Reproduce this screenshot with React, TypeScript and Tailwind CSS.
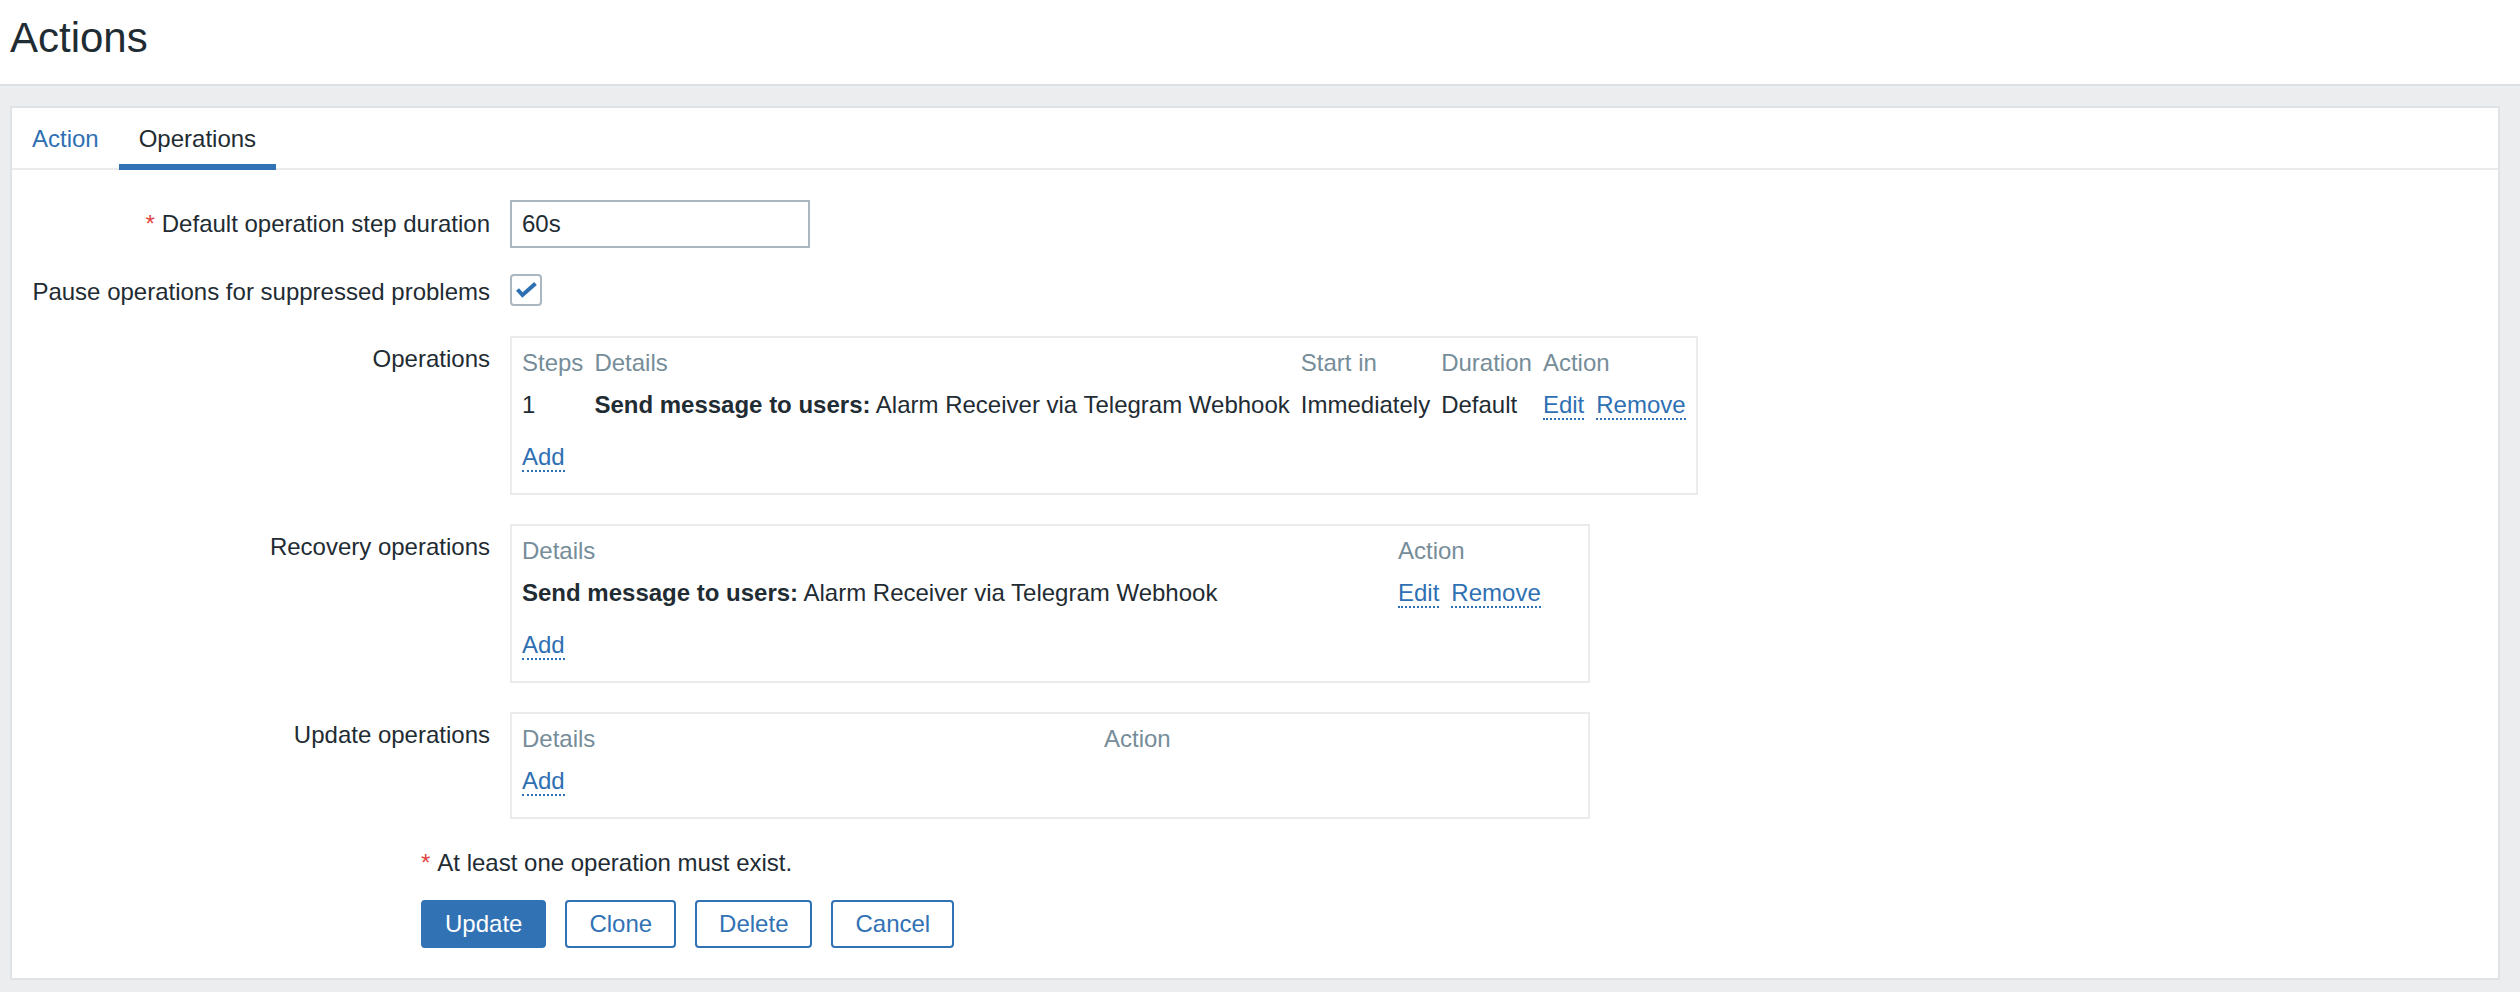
import React from "react";

const linkCls = "text-[#2f70b3] border-b-2 border-dotted border-[#2f70b3] cursor-pointer";

const Req = () => <span className="text-[#e0443f] mr-[7px]">*</span>;

const Add = () => (
  <span className={linkCls}>Add</span>
);

const EditRemove = () => (
  <span className="whitespace-nowrap">
    <span className={linkCls + " mr-[12px]"}>Edit</span>
    <span className={linkCls}>Remove</span>
  </span>
);

const th = "text-left font-normal text-[#768d99] px-[5.5px] pt-[11px] pb-[4px] whitespace-nowrap";
const td = "px-[5.5px] pt-[10px] pb-[14px] whitespace-nowrap align-top";
const tdAdd = "px-[5.5px] pt-[10px] pb-[22px]";

const SendMsg = () => (
  <>
    <b>Send message to users:</b> Alarm Receiver via Telegram Webhook
  </>
);

const FormRow = ({ label, children, className = "", labelCls = "" }: { label: React.ReactNode; children: React.ReactNode; className?: string; labelCls?: string }) => (
  <div className={"flex gap-[20px] " + className}>
    <div className={"w-[478px] shrink-0 text-right " + labelCls}>{label}</div>
    <div>{children}</div>
  </div>
);

const btn = "h-[48px] px-[22px] rounded-[4px] border-2 border-[#3172b4]";

export default function App() {
  return (
    <div className="min-h-screen bg-[#ebedef] font-['Liberation_Sans',Arial,sans-serif] text-[24px] leading-[28px] text-[#1f2c33]">
      <div className="h-[86px] bg-white border-b-2 border-[#dde0e3] pl-[10px] pt-[14px]">
        <h1 className="text-[42px] leading-[48px]">Actions</h1>
      </div>

      <div className="pt-[20px] pl-[10px] pr-[20px] pb-[12px]">
        <div className="bg-white border-2 border-[#dfe3e6] pb-[30px]">
          {/* tabs */}
          <div className="flex border-b-2 border-[#ebebeb]">
            <div className="px-[20px] pt-[17px] pb-[11px] border-b-[6px] border-transparent mb-[-2px] text-[#2f70b3]">
              Action
            </div>
            <div className="px-[20px] pt-[17px] pb-[11px] border-b-[6px] border-[#3172b4] mb-[-2px]">
              Operations
            </div>
          </div>

          <div className="pt-[30px]">
            <FormRow
              className="items-center"
              label={
                <>
                  <Req />
                  Default operation step duration
                </>
              }
            >
              <input
                defaultValue="60s"
                className="w-[300px] h-[48px] border-2 border-[#acb6be] px-[10px] outline-none"
              />
            </FormRow>

            <FormRow className="mt-[26px] items-start" labelCls="pt-[4px]" label="Pause operations for suppressed problems">
              <div className="w-[32px] h-[32px] border-2 border-[#acb6be] rounded-[4px] flex items-center justify-center">
                <svg width="32" height="32" viewBox="0 0 32 32" className="-m-[2px]">
                  <path d="M7.5 15.5 L12.5 21 L25.5 9.5" fill="none" stroke="#2f70b3" strokeWidth="4" />
                </svg>
              </div>
            </FormRow>

            <FormRow className="mt-[30px]" labelCls="pt-[9px]" label="Operations">
              <div className="border-2 border-[#ebebeb] px-[4.5px] min-w-[1080px] w-fit">
                <table className="border-collapse">
                  <thead>
                    <tr>
                      <th className={th}>Steps</th>
                      <th className={th}>Details</th>
                      <th className={th}>Start in</th>
                      <th className={th}>Duration</th>
                      <th className={th}>Action</th>
                    </tr>
                  </thead>
                  <tbody>
                    <tr>
                      <td className={td}>1</td>
                      <td className={td}>
                        <SendMsg />
                      </td>
                      <td className={td}>Immediately</td>
                      <td className={td}>Default</td>
                      <td className={td}>
                        <EditRemove />
                      </td>
                    </tr>
                    <tr>
                      <td className={tdAdd} colSpan={5}>
                        <Add />
                      </td>
                    </tr>
                  </tbody>
                </table>
              </div>
            </FormRow>

            <FormRow className="mt-[29px]" labelCls="pt-[9px]" label="Recovery operations">
              <div className="border-2 border-[#ebebeb] px-[4.5px] w-[1080px]">
                <table className="border-collapse table-fixed w-full">
                  <colgroup>
                    <col className="w-[876px]" />
                    <col />
                  </colgroup>
                  <thead>
                    <tr>
                      <th className={th}>Details</th>
                      <th className={th}>Action</th>
                    </tr>
                  </thead>
                  <tbody>
                    <tr>
                      <td className={td}>
                        <SendMsg />
                      </td>
                      <td className={td}>
                        <EditRemove />
                      </td>
                    </tr>
                    <tr>
                      <td className={tdAdd} colSpan={2}>
                        <Add />
                      </td>
                    </tr>
                  </tbody>
                </table>
              </div>
            </FormRow>

            <FormRow className="mt-[29px]" labelCls="pt-[9px]" label="Update operations">
              <div className="border-2 border-[#ebebeb] px-[4.5px] w-[1080px]">
                <table className="border-collapse table-fixed w-full">
                  <colgroup>
                    <col className="w-[582px]" />
                    <col />
                  </colgroup>
                  <thead>
                    <tr>
                      <th className={th}>Details</th>
                      <th className={th}>Action</th>
                    </tr>
                  </thead>
                  <tbody>
                    <tr>
                      <td className={tdAdd} colSpan={2}>
                        <Add />
                      </td>
                    </tr>
                  </tbody>
                </table>
              </div>
            </FormRow>

            <div className="mt-[30px] pl-[409px]">
              <Req />
              At least one operation must exist.
            </div>

            <div className="mt-[23px] pl-[409px] flex gap-[19px]">
              <button className={btn + " bg-[#3172b4] text-white"}>Update</button>
              <button className={btn + " bg-white text-[#3172b4]"}>Clone</button>
              <button className={btn + " bg-white text-[#3172b4]"}>Delete</button>
              <button className={btn + " bg-white text-[#3172b4]"}>Cancel</button>
            </div>
          </div>
        </div>
      </div>
    </div>
  );
}
